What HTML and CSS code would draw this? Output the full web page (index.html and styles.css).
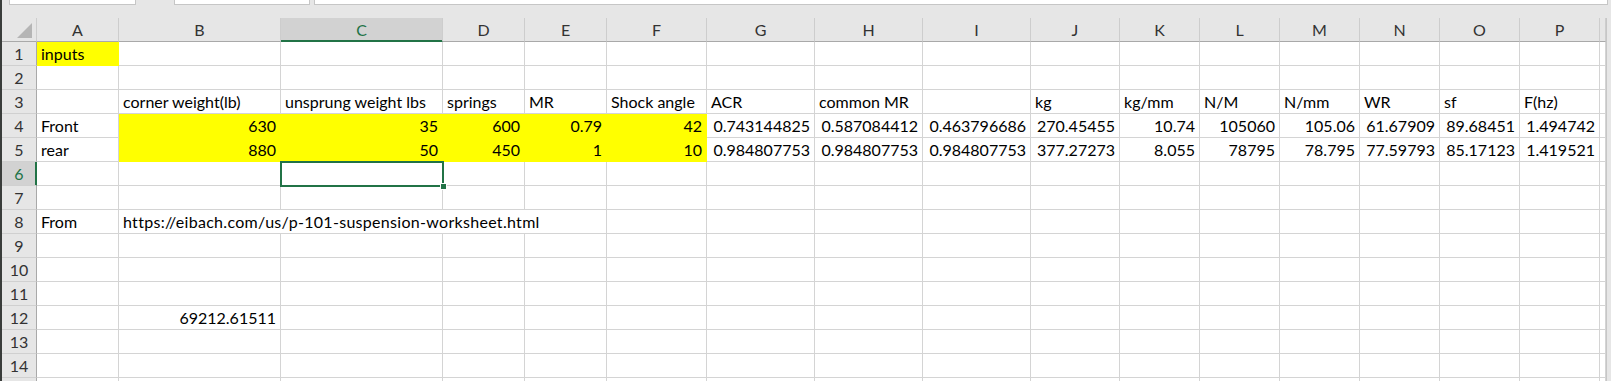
FILE: index.html
```html
<!DOCTYPE html>
<html lang="en">
<head>
    <meta charset="UTF-8">
    <meta name="viewport" content="width=device-width, initial-scale=1.0">
    <title>Suspension worksheet</title>
    <link rel="stylesheet" href="styles.css">
</head>
<body>
    <div class="topbar">
        <div class="top-box name-box"></div>
        <div class="top-box fx-box"></div>
        <div class="top-box formula-box"></div>
    </div>

    <div class="sheet">
        <table class="grid">
            <colgroup>
                <col class="w-rh">
                <col class="w82">
                <col class="w162">
                <col class="w162">
                <col class="w82">
                <col class="w82">
                <col class="w100">
                <col class="w108">
                <col class="w108">
                <col class="w108">
                <col class="w89">
                <col class="w80">
                <col class="w80">
                <col class="w80">
                <col class="w80">
                <col class="w80">
                <col class="w80">
                <col class="w6">
            </colgroup>
            <thead>
                <tr>
                    <th class="corner">
                        <svg class="corner-mark" width="16" height="16" viewBox="0 0 16 16"><polygon points="15,0 15,15 0,15" fill="#b5b5b5"/></svg>
                    </th>
                    <th>A</th>
                    <th>B</th>
                    <th class="selected">C</th>
                    <th>D</th>
                    <th>E</th>
                    <th>F</th>
                    <th>G</th>
                    <th>H</th>
                    <th>I</th>
                    <th>J</th>
                    <th>K</th>
                    <th>L</th>
                    <th>M</th>
                    <th>N</th>
                    <th>O</th>
                    <th>P</th>
                    <th></th>
                </tr>
            </thead>
            <tbody>
                <tr>
                    <th>1</th>
                    <td class="fill">inputs</td>
                    <td></td><td></td><td></td><td></td><td></td><td></td><td></td><td></td>
                    <td></td><td></td><td></td><td></td><td></td><td></td><td></td><td></td>
                </tr>
                <tr>
                    <th>2</th>
                    <td></td><td></td><td></td><td></td><td></td><td></td><td></td><td></td>
                    <td></td><td></td><td></td><td></td><td></td><td></td><td></td><td></td><td></td>
                </tr>
                <tr>
                    <th>3</th>
                    <td></td>
                    <td>corner weight(lb)</td>
                    <td>unsprung weight lbs</td>
                    <td>springs</td>
                    <td>MR</td>
                    <td>Shock angle</td>
                    <td>ACR</td>
                    <td>common MR</td>
                    <td></td>
                    <td>kg</td>
                    <td>kg/mm</td>
                    <td>N/M</td>
                    <td>N/mm</td>
                    <td>WR</td>
                    <td>sf</td>
                    <td>F(hz)</td>
                    <td></td>
                </tr>
                <tr>
                    <th>4</th>
                    <td>Front</td>
                    <td class="num fill">630</td>
                    <td class="num fill">35</td>
                    <td class="num fill">600</td>
                    <td class="num fill">0.79</td>
                    <td class="num fill">42</td>
                    <td class="num">0.743144825</td>
                    <td class="num">0.587084412</td>
                    <td class="num">0.463796686</td>
                    <td class="num">270.45455</td>
                    <td class="num">10.74</td>
                    <td class="num">105060</td>
                    <td class="num">105.06</td>
                    <td class="num">61.67909</td>
                    <td class="num">89.68451</td>
                    <td class="num">1.494742</td>
                    <td></td>
                </tr>
                <tr>
                    <th>5</th>
                    <td>rear</td>
                    <td class="num fill">880</td>
                    <td class="num fill">50</td>
                    <td class="num fill">450</td>
                    <td class="num fill">1</td>
                    <td class="num fill">10</td>
                    <td class="num">0.984807753</td>
                    <td class="num">0.984807753</td>
                    <td class="num">0.984807753</td>
                    <td class="num">377.27273</td>
                    <td class="num">8.055</td>
                    <td class="num">78795</td>
                    <td class="num">78.795</td>
                    <td class="num">77.59793</td>
                    <td class="num">85.17123</td>
                    <td class="num">1.419521</td>
                    <td></td>
                </tr>
                <tr>
                    <th class="selected-row">6</th>
                    <td></td><td></td>
                    <td class="active"><div class="cursor"></div></td>
                    <td></td><td></td><td></td><td></td><td></td>
                    <td></td><td></td><td></td><td></td><td></td><td></td><td></td><td></td><td></td>
                </tr>
                <tr>
                    <th>7</th>
                    <td></td><td></td><td></td><td></td><td></td><td></td><td></td><td></td>
                    <td></td><td></td><td></td><td></td><td></td><td></td><td></td><td></td><td></td>
                </tr>
                <tr>
                    <th>8</th>
                    <td>From</td>
                    <td colspan="4" class="url">https://eibach.com/us/p-101-suspension-worksheet.html</td>
                    <td></td><td></td><td></td><td></td><td></td><td></td><td></td><td></td>
                    <td></td><td></td><td></td><td></td>
                </tr>
                <tr>
                    <th>9</th>
                    <td></td><td></td><td></td><td></td><td></td><td></td><td></td><td></td>
                    <td></td><td></td><td></td><td></td><td></td><td></td><td></td><td></td><td></td>
                </tr>
                <tr>
                    <th>10</th>
                    <td></td><td></td><td></td><td></td><td></td><td></td><td></td><td></td>
                    <td></td><td></td><td></td><td></td><td></td><td></td><td></td><td></td><td></td>
                </tr>
                <tr>
                    <th>11</th>
                    <td></td><td></td><td></td><td></td><td></td><td></td><td></td><td></td>
                    <td></td><td></td><td></td><td></td><td></td><td></td><td></td><td></td><td></td>
                </tr>
                <tr>
                    <th>12</th>
                    <td></td>
                    <td class="num">69212.61511</td>
                    <td></td><td></td><td></td><td></td><td></td><td></td><td></td>
                    <td></td><td></td><td></td><td></td><td></td><td></td><td></td><td></td>
                </tr>
                <tr>
                    <th>13</th>
                    <td></td><td></td><td></td><td></td><td></td><td></td><td></td><td></td>
                    <td></td><td></td><td></td><td></td><td></td><td></td><td></td><td></td><td></td>
                </tr>
                <tr>
                    <th>14</th>
                    <td></td><td></td><td></td><td></td><td></td><td></td><td></td><td></td>
                    <td></td><td></td><td></td><td></td><td></td><td></td><td></td><td></td><td></td>
                </tr>
                <tr>
                    <th></th>
                    <td></td><td></td><td></td><td></td><td></td><td></td><td></td><td></td>
                    <td></td><td></td><td></td><td></td><td></td><td></td><td></td><td></td><td></td>
                </tr>
            </tbody>
        </table>
        <div class="vscroll"></div>
    </div>
</body>
</html>
```

FILE: styles.css
```css
body {
    margin: 0;
    height: 381px;
    overflow: hidden;
    background-color: #e6e6e6;
    border-left: 2px solid #3a3d3b;
    font-family: Lato, "Noto Sans", sans-serif;
    font-size: 16px;
    color: #000;
}

.topbar {
    display: flex;
    height: 18px;
    padding-left: 7px;
    padding-right: 3px;
    gap: 38px;
}

.top-box {
    height: 4px;
    background-color: #fff;
    border: 1px solid #c6c6c6;
    border-top: none;
}

.name-box {
    width: 125px;
}

.fx-box {
    width: 134px;
    margin-right: -34px;
}

.formula-box {
    flex: 1;
}

.sheet {
    display: flex;
}

.grid {
    table-layout: fixed;
    border-collapse: separate;
    border-spacing: 0;
    width: 1604px;
    background-color: #fff;
}

.w-rh { width: 35px; }
.w82 { width: 82px; }
.w162 { width: 162px; }
.w100 { width: 100px; }
.w108 { width: 108px; }
.w89 { width: 89px; }
.w80 { width: 80px; }
.w6 { width: 6px; }

tr {
    height: 24px;
}

th,
td {
    box-sizing: border-box;
    padding: 0 0 2px;
    white-space: nowrap;
    vertical-align: bottom;
    line-height: 18px;
}

td {
    padding: 0 3px 2px 4px;
    border-right: 1px solid #d4d4d4;
    border-bottom: 1px solid #d4d4d4;
    text-align: left;
}

td.num {
    text-align: right;
    padding-right: 4px;
}

td.url {
    letter-spacing: 0.3px;
}

td.fill {
    background-color: #ffff00;
    border-color: #ffff00;
}

th {
    font-weight: normal;
    color: #333;
    background-color: #e6e6e6;
    text-align: center;
}

thead th {
    padding-bottom: 2px;
    border-right: 1px solid #cdcdcd;
    border-bottom: 1px solid #a9a9a9;
}

tbody th {
    border-right: 1px solid #a9a9a9;
    border-bottom: 1px solid #d0d0d0;
}

.corner {
    position: relative;
}

.corner-mark {
    position: absolute;
    right: 3px;
    bottom: 2px;
}

thead th.selected {
    background-color: #d2d2d2;
    color: #217346;
    border-bottom-color: #217346;
    box-shadow: inset 0 -1px 0 #217346;
}

tbody th.selected-row {
    background-color: #d2d2d2;
    color: #217346;
    border-right-color: #217346;
    box-shadow: inset -1px 0 0 #217346;
}

td.active {
    position: relative;
}

.cursor {
    position: absolute;
    left: -1px;
    top: -1px;
    right: -2px;
    bottom: -2px;
    border: 2px solid #217346;
}

.cursor::after {
    content: "";
    position: absolute;
    right: -5px;
    bottom: -5px;
    width: 5px;
    height: 5px;
    background-color: #217346;
    border: 1px solid #fff;
}

.vscroll {
    flex: 1;
    background-color: #e6e6e6;
    border-left: 1px solid #c6c6c6;
}
```
